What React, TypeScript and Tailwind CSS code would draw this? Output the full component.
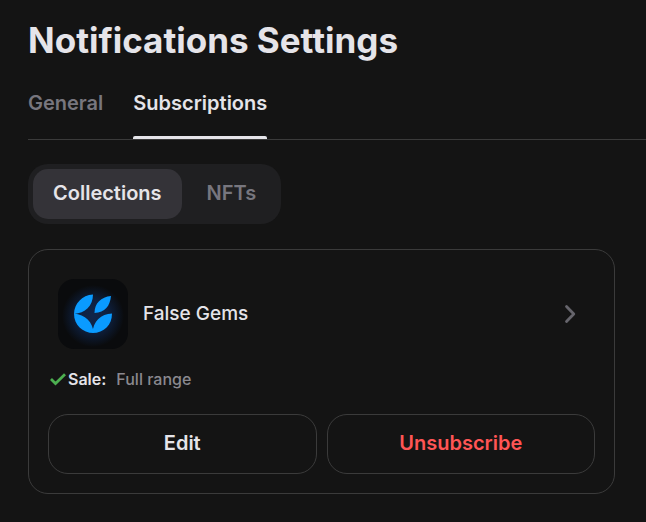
import { useState } from "react";

const tabs = ["General", "Subscriptions"];
const kinds = ["Collections", "NFTs"];

function GemLogo() {
  return (
    <svg viewBox="0 0 70 70" className="size-[70px] shrink-0 rounded-2xl bg-[#0a0b0d]" aria-hidden="true">
      <defs>
        <radialGradient id="glow">
          <stop offset="0" stopColor="#10264a" />
          <stop offset="0.5" stopColor="#0e203f" />
          <stop offset="1" stopColor="#0a0b0d" />
        </radialGradient>
      </defs>
      <circle cx="35" cy="37" r="31" fill="url(#glow)" />
      <g fill="#0a9bff">
        <path d="M35 15.5C24 16 16 25 16 35C27 34 35 27 35 15.5Z" />
        <path d="M53 17C43 18 36.500 24 36.500 34C47 33.500 52 27 53 17Z" />
        <path d="M16 34.500C16 46 24.500 54 35.500 54C35 43 27 35.500 16 34.500Z" />
        <path d="M54 34.500C43 35 35 42 34.500 54C46 54 54 46 54 34.500Z" />
      </g>
    </svg>
  );
}

export default function App() {
  const [tab, setTab] = useState("Subscriptions");
  const [kind, setKind] = useState("Collections");

  return (
    <main className="min-h-screen bg-[#141414] pt-5 pl-7 font-['Inter',sans-serif] text-[#e5e4e9]">
      <h1 className="text-[35px] leading-10 font-bold">Notifications Settings</h1>

      <nav className="mt-7 flex gap-[30px] border-b border-[#3b3b3b]" aria-label="Settings">
        {tabs.map((name) => (
          <button
            key={name}
            onClick={() => setTab(name)}
            className={
              name === tab
                ? "flex flex-col pt-px text-xl font-semibold"
                : "flex flex-col pt-px text-xl font-semibold text-[#77767e]"
            }
          >
            {name}
            <span
              className={name === tab ? "mt-[19px] h-[3px] w-full rounded-t-xs bg-[#e5e4e9]" : "mt-[19px] h-[3px] w-full"}
            />
          </button>
        ))}
      </nav>

      <div className="mt-6 inline-flex gap-[5px] rounded-[20px] bg-[#1f1f21] p-[5px]">
        {kinds.map((name) => (
          <button
            key={name}
            onClick={() => setKind(name)}
            className={
              name === kind
                ? "h-[50px] rounded-[15px] bg-[#343338] px-5 pb-0.5 text-xl font-semibold"
                : "h-[50px] rounded-[15px] px-5 pb-0.5 text-xl font-semibold text-[#77767e]"
            }
          >
            {name}
          </button>
        ))}
      </div>

      <section className="mt-[25px] mr-[31px] rounded-[20px] border border-[#3b3b3b] px-[19px] pt-[29px] pb-[19px]">
        <a href="#collection" className="flex items-center gap-[15px] px-2.5">
          <GemLogo />
          <span className="grow text-[19px] leading-7 font-medium">False Gems</span>
          <svg viewBox="0 0 30 30" className="size-[30px]" fill="none" stroke="#66656c" strokeWidth="2.8" strokeLinecap="round" strokeLinejoin="round" aria-hidden="true">
            <path d="M11.500 7.500L18.800 15L11.500 22.500" />
          </svg>
        </a>

        <p className="mt-[18px] flex items-center text-base font-medium">
          <svg viewBox="0 0 20 20" className="size-5" fill="none" stroke="#4caf50" strokeWidth="2.800" aria-hidden="true">
            <path d="M3 10L7.500 14.500L17 5.300" />
          </svg>
          <span className="font-semibold">Sale:</span>
          <span className="ml-2.5 text-[#8a898f]">Full range</span>
        </p>

        <div className="mt-[23px] grid grid-cols-2 gap-2.5">
          <button className="h-[60px] rounded-[20px] border border-[#3b3b3b] pb-0.5 text-xl font-semibold">Edit</button>
          <button className="h-[60px] rounded-[20px] border border-[#3b3b3b] pb-0.5 text-xl font-semibold text-[#ff5555]">
            Unsubscribe
          </button>
        </div>
      </section>
    </main>
  );
}
